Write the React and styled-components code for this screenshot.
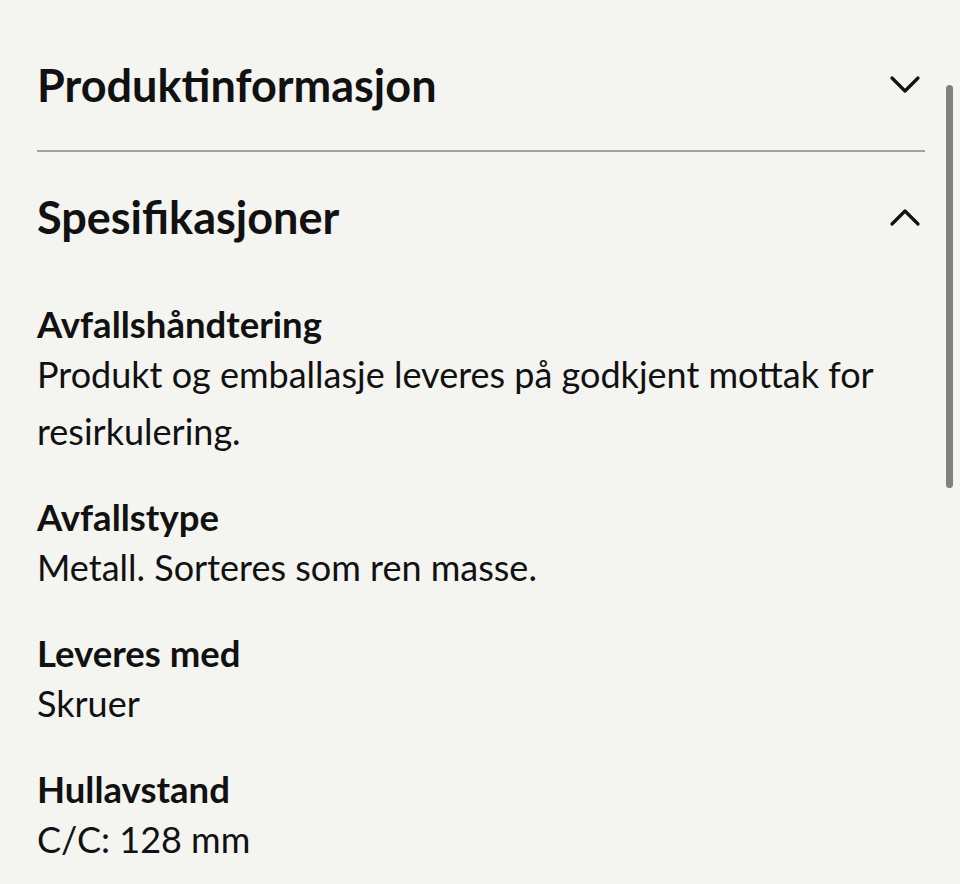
import React from "react";
import styled, { createGlobalStyle } from "styled-components";

const GlobalStyle = createGlobalStyle`
  html, body {
    margin: 0;
    padding: 0;
    background: #f4f4f1;
  }
  body {
    font-family: "Lato", "Noto Sans", sans-serif;
    color: #111;
  }
`;

const Page = styled.div`
  position: relative;
  height: 884px;
  overflow: hidden;
  padding: 20px 36px 0 37px;
  box-sizing: border-box;
`;

const Item = styled.section`
  border-bottom: ${(p) => (p.$divider ? "2px solid #a3a3a1" : "none")};
  margin-right: -1px;
`;

const Header = styled.div`
  display: flex;
  align-items: center;
  justify-content: space-between;
  height: 130px;
`;

const Heading = styled.h2`
  margin: 0;
  font-size: 45px;
  font-weight: 700;
  line-height: 1.2;
`;

const Chevron = styled.svg`
  width: 32px;
  height: 20px;
  margin-right: 4px;
  transform: ${(p) => (p.$up ? "rotate(180deg)" : "none")};
`;

const Content = styled.div`
  display: flex;
  flex-direction: column;
  gap: 35px;
  padding-top: 20px;
`;

const Spec = styled.div`
  display: flex;
  flex-direction: column;
`;

const SpecTitle = styled.div`
  font-size: 36.5px;
  font-weight: 700;
  line-height: 44px;
`;

const SpecText = styled.div`
  font-size: 36px;
  line-height: 57px;
  max-width: 870px;
`;

const Scrollbar = styled.div`
  position: absolute;
  right: 7px;
  top: 85px;
  width: 7px;
  height: 403px;
  border-radius: 4px;
  background: #808080;
`;

function ChevronIcon({ up }) {
  return (
    <Chevron $up={up} viewBox="0 0 32 20">
      <path d="M3 3 L16 16 L29 3" fill="none" stroke="#111" strokeWidth="3.2" strokeLinecap="round" strokeLinejoin="round" />
    </Chevron>
  );
}

const specs = [
  { title: "Avfallshåndtering", text: "Produkt og emballasje leveres på godkjent mottak for resirkulering." },
  { title: "Avfallstype", text: "Metall. Sorteres som ren masse." },
  { title: "Leveres med", text: "Skruer" },
  { title: "Hullavstand", text: "C/C: 128 mm" },
];

export default function App() {
  return (
    <>
      <GlobalStyle />
      <Page>
        <Item $divider>
          <Header>
            <Heading>Produktinformasjon</Heading>
            <ChevronIcon />
          </Header>
        </Item>
        <Item>
          <Header>
            <Heading>Spesifikasjoner</Heading>
            <ChevronIcon up />
          </Header>
          <Content>
            {specs.map((s) => (
              <Spec key={s.title}>
                <SpecTitle>{s.title}</SpecTitle>
                <SpecText>{s.text}</SpecText>
              </Spec>
            ))}
          </Content>
        </Item>
        <Scrollbar />
      </Page>
    </>
  );
}
